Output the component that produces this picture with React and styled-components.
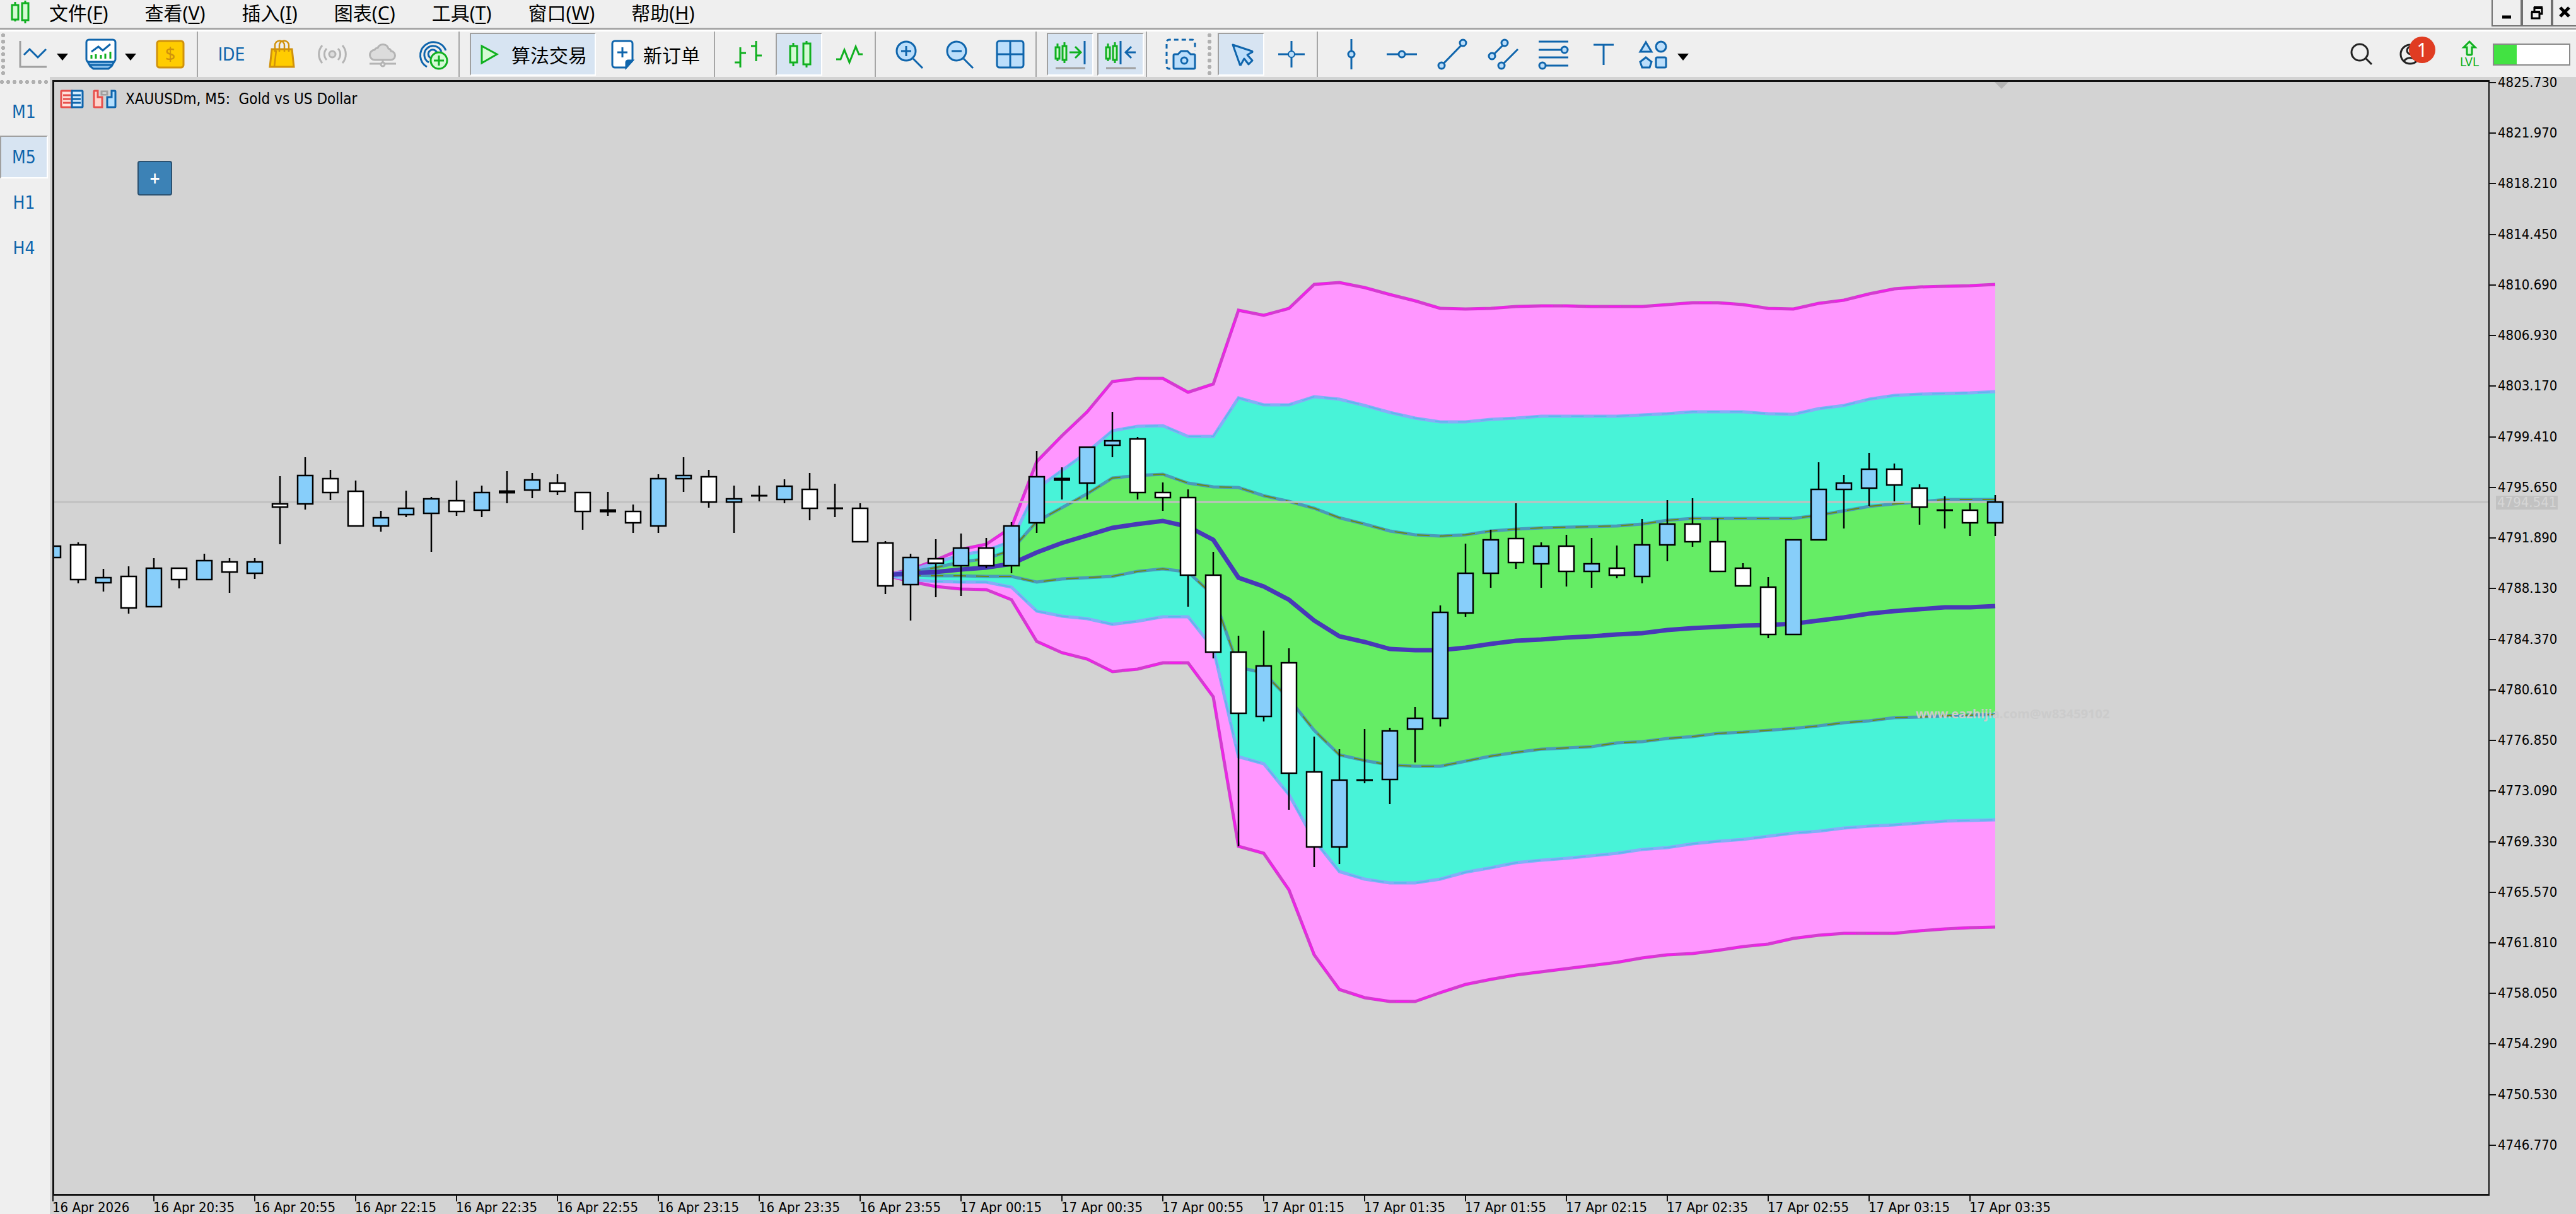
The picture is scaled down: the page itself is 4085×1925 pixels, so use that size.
import React from "react";
import styled, { createGlobalStyle, css } from "styled-components";

const BLUE = "#0f65ac";
const SKY = "#bbdefb";
const GREEN = "#10b020";
const MINT = "#d4fad4";
const GRAY = "#a0a0a0";

const Global = createGlobalStyle`
  * { box-sizing: border-box; }
  html, body, #root { height: 100%; }
  body { margin: 0; overflow: hidden; background: #efefef; }
  button { font: inherit; color: inherit; }
`;

const App_ = styled.div`
  display: flex;
  flex-direction: column;
  height: 100vh;
  overflow: hidden;
  background: #efefef;
  color: #000;
  font-family: "Noto Sans", "Noto Sans CJK SC", sans-serif;
  font-size: 30px;
`;

const MenuBar = styled.header`
  display: flex;
  flex: none;
  height: 47px;
  padding-left: 16px;
  border-bottom: 3px solid #a6a6a6;
`;

const MenuItems = styled.nav`
  display: flex;
  align-items: center;
  gap: 58px;
  height: 42px;
  margin-left: 30px;
`;

const MenuItem = styled.button`
  padding: 0;
  border: 0;
  background: none;
  line-height: 40px;
  white-space: nowrap;
  u {
    text-decoration-thickness: 2px;
    text-underline-offset: 4px;
  }
`;

const WindowControls = styled.div`
  display: flex;
  height: 42px;
  margin-left: auto;
`;

const WindowButton = styled.button`
  display: flex;
  align-items: center;
  justify-content: center;
  width: ${(p) => (p.$last ? 38 : 48)}px;
  padding: 0;
  border: 2px solid #707070;
  border-top: 0;
  border-right-width: ${(p) => (p.$last ? 0 : 2)}px;
  background: #efefef;
`;

const Toolbar = styled.div`
  display: flex;
  flex: none;
  align-items: stretch;
  height: 75px;
  border-top: 3px solid #fff;
`;

const Group = styled.div`
  display: flex;
  align-items: center;
  gap: ${(p) => p.$gap || 6}px;
  padding-left: ${(p) => p.$start || 0}px;
  padding-right: ${(p) => p.$end || 0}px;
`;

const Separator = styled.div`
  flex: none;
  width: 2px;
  margin: 0 16px 0 3px;
  background: #a6a6a6;
`;

const gripDots = css`
  background-image: radial-gradient(circle at 3px 3px, #b0b0b0 3px, transparent 3px);
  background-size: 10px 10px;
`;

const Grip = styled.div`
  flex: none;
  width: 6px;
  height: 66px;
  margin: 3px ${(p) => p.$after}px 0 ${(p) => p.$before}px;
  ${gripDots}
`;

const pressed = css`
  border-color: #a0a0a0 #fff #fff #a0a0a0;
  background: #d7e4f2;
`;

const ToolButton = styled.button`
  display: flex;
  flex: none;
  align-items: center;
  justify-content: center;
  gap: ${(p) => p.$gap || 14}px;
  width: ${(p) => p.$width || 74}px;
  height: 68px;
  padding: 0;
  border: 2px solid transparent;
  background: none;
  white-space: nowrap;
  color: ${(p) => (p.$blue ? BLUE : "#000")};
  font-family: ${(p) => (p.$blue ? '"DejaVu Sans Condensed", "Noto Sans", sans-serif' : "inherit")};
  font-size: ${(p) => (p.$blue ? 28 : 30)}px;
  ${(p) => p.$on && pressed}
`;

const Icon = styled.svg`
  display: block;
  flex: none;
  overflow: visible;
  fill: none;
  stroke: ${(p) => p.$color || BLUE};
  stroke-width: 3;
`;

const Status = styled.div`
  display: flex;
  align-items: center;
  gap: 32px;
  margin-left: auto;
  padding-right: 9px;
`;

const StatusButton = styled.button`
  position: relative;
  display: flex;
  flex: none;
  width: ${(p) => p.$width}px;
  height: 48px;
  padding: 0;
  border: 0;
  background: none;
`;

const Badge = styled.span`
  position: absolute;
  top: -4px;
  right: 0;
  width: 42px;
  height: 42px;
  border-radius: 50%;
  background: #e03c22;
  color: #fff;
  font-size: 30px;
  line-height: 42px;
  text-align: center;
`;

const Connection = styled.div`
  display: flex;
  align-items: center;
  gap: 15px;
`;

const Level = styled.div`
  display: flex;
  flex-direction: column;
  align-items: center;
  width: 44px;
  color: ${GREEN};
  font-family: "DejaVu Sans Condensed", "Noto Sans", sans-serif;
  font-size: 20px;
  line-height: 20px;
`;

const Meter = styled.div`
  width: 123px;
  height: 35px;
  border: 2px solid #8a8a8a;
  background: linear-gradient(to right, #42e242 30%, #fff 30%);
`;

const Workspace = styled.main`
  display: flex;
  flex: 1;
  min-height: 0;
`;

const Sidebar = styled.aside`
  display: flex;
  flex: none;
  flex-direction: column;
  gap: 4px;
  width: 79px;
`;

const SideGrip = styled.div`
  flex: none;
  height: 6px;
  margin: 5px 0 6px;
  ${gripDots}
`;

const ChartArea = styled.section`
  display: grid;
  flex: 1;
  grid-template-columns: 1fr 137px;
  grid-template-rows: 1fr 29px;
  min-width: 0;
  padding-left: 4px;
  background: #d3d3d3;
  font-family: "DejaVu Sans Condensed", "Noto Sans", sans-serif;
  font-size: 22px;
  line-height: 22px;
`;

const Plot = styled.div`
  position: relative;
  min-height: 0;
  margin-top: 5px;
  border: 3px solid #111;
  border-right-width: 2px;
`;

const Canvas = styled.svg`
  display: block;
  position: absolute;
  inset: 0;
  width: 100%;
  height: 100%;
`;

const ChartTitle = styled.h1`
  display: flex;
  position: absolute;
  top: 12px;
  left: 9px;
  align-items: center;
  gap: 14px;
  margin: 0;
  font-size: 24px;
  font-weight: 400;
  line-height: 30px;
  white-space: pre;
`;

const AddButton = styled.button`
  position: absolute;
  top: 125px;
  left: 132px;
  width: 55px;
  height: 55px;
  padding: 0;
  border: 2px solid #2b5170;
  border-radius: 4px;
  background: #3c82b6;
  color: #fff;
  font-size: 24px;
  font-weight: 700;
`;

const PriceAxis = styled.div`
  position: relative;
  display: flex;
  flex-direction: column;
  justify-content: space-between;
  min-height: 0;
  margin: -2px 0 69px;
`;

const Price = styled.div`
  display: flex;
  align-items: center;
  gap: 3px;
  height: 22px;
  &::before {
    content: "";
    width: 10px;
    height: 2px;
    background: #111;
  }
`;

const CurrentPrice = styled.div`
  position: absolute;
  top: 666px;
  left: 10px;
  padding: 0 2px;
  background: #c2c2c2;
  color: #d6d6d6;
`;

const TimeAxis = styled.div`
  display: grid;
  grid-column: 1 / -1;
  grid-template-columns: repeat(20, 160fr) 802fr;
`;

const Time = styled.div`
  min-width: 0;
  line-height: 20px;
  white-space: nowrap;
  &::before {
    content: "";
    display: block;
    width: 2px;
    height: 9px;
    background: #111;
  }
`;

const MENUS = [
  ["文件", "F"], ["查看", "V"], ["插入", "I"], ["图表", "C"],
  ["工具", "T"], ["窗口", "W"], ["帮助", "H"],
];

const TIMES = [
  "16 Apr 2026", "16 Apr 20:35", "16 Apr 20:55", "16 Apr 22:15", "16 Apr 22:35",
  "16 Apr 22:55", "16 Apr 23:15", "16 Apr 23:35", "16 Apr 23:55", "17 Apr 00:15",
  "17 Apr 00:35", "17 Apr 00:55", "17 Apr 01:15", "17 Apr 01:35", "17 Apr 01:55",
  "17 Apr 02:15", "17 Apr 02:35", "17 Apr 02:55", "17 Apr 03:15", "17 Apr 03:35",
];

const PRICES = Array.from({ length: 22 }, (_, i) => (4825.73 - i * 3.76).toFixed(3));

// kind (u = up, d = down, x = flat), wick top, body top, body bottom, wick bottom
const CANDLES = [
  ["u", 866, 866, 884, 884], ["d", 860, 864, 919, 925], ["u", 902, 916, 924, 938],
  ["d", 898, 914, 964, 973], ["u", 885, 901, 962, 962], ["d", 901, 901, 919, 933],
  ["u", 878, 889, 919, 919], ["d", 885, 891, 907, 940], ["u", 885, 891, 909, 918],
  ["d", 755, 799, 804, 863], ["u", 725, 754, 799, 808], ["d", 745, 759, 781, 793],
  ["d", 762, 779, 834, 834], ["u", 810, 821, 834, 843], ["u", 778, 806, 816, 820],
  ["u", 788, 791, 814, 875], ["d", 762, 794, 811, 818], ["u", 770, 781, 809, 820],
  ["x", 747, 779, 781, 798], ["u", 750, 761, 777, 790], ["d", 752, 766, 779, 785],
  ["d", 781, 781, 811, 840], ["x", 780, 809, 811, 818], ["d", 800, 811, 829, 845],
  ["u", 752, 759, 834, 845], ["u", 725, 754, 759, 780], ["d", 745, 756, 796, 805],
  ["u", 770, 791, 796, 845], ["x", 770, 786, 786, 795], ["u", 760, 771, 792, 798],
  ["d", 750, 776, 806, 825], ["x", 767, 806, 806, 820], ["d", 798, 806, 859, 859],
  ["d", 858, 861, 929, 942], ["u", 878, 884, 927, 984], ["d", 855, 886, 893, 947],
  ["u", 846, 869, 897, 945], ["d", 853, 869, 897, 901], ["u", 828, 834, 897, 909],
  ["u", 715, 756, 829, 845], ["x", 741, 759, 761, 792], ["u", 709, 709, 766, 792],
  ["u", 653, 699, 706, 725], ["d", 693, 696, 781, 792], ["d", 765, 781, 789, 810],
  ["d", 776, 789, 912, 962], ["d", 875, 912, 1034, 1044], ["d", 1008, 1034, 1131, 1342],
  ["u", 1000, 1056, 1136, 1144], ["d", 1028, 1051, 1226, 1284], ["d", 1168, 1224, 1343, 1375],
  ["u", 1188, 1237, 1343, 1370], ["x", 1156, 1237, 1237, 1242], ["u", 1154, 1159, 1236, 1275],
  ["u", 1121, 1139, 1156, 1209], ["u", 960, 971, 1139, 1152], ["u", 862, 909, 972, 978],
  ["u", 840, 856, 909, 932], ["d", 798, 854, 892, 902], ["u", 860, 866, 894, 932],
  ["d", 848, 866, 906, 930], ["u", 853, 894, 906, 932], ["d", 865, 901, 912, 917],
  ["u", 823, 864, 914, 925], ["u", 793, 831, 864, 890], ["d", 790, 831, 859, 867],
  ["d", 822, 859, 906, 906], ["d", 893, 901, 929, 929], ["d", 915, 931, 1006, 1012],
  ["u", 856, 856, 1006, 1006], ["u", 733, 776, 856, 856], ["u", 753, 766, 776, 838],
  ["u", 718, 744, 774, 802], ["d", 735, 744, 769, 795], ["d", 768, 774, 804, 832],
  ["x", 787, 809, 809, 838], ["d", 798, 809, 829, 850], ["u", 785, 796, 829, 850],
];

const BAND_START = 33;
const UPPER3 = [912, 903, 888, 871, 863, 836, 732, 691, 653, 605, 600, 600, 622, 609, 492, 500, 489, 451, 448, 456, 467, 477, 489, 490, 489, 486, 485, 485, 486, 486, 486, 483, 480, 480, 483, 489, 490, 481, 476, 466, 458, 455, 454, 453, 451];
const UPPER2 = [912, 905, 892, 880, 873, 858, 775, 746, 717, 683, 676, 675, 692, 692, 631, 642, 642, 629, 633, 643, 654, 663, 669, 669, 665, 663, 660, 660, 660, 660, 658, 656, 653, 653, 653, 656, 657, 648, 643, 633, 627, 625, 624, 623, 621];
const UPPER1 = [912, 907, 900, 891, 886, 872, 827, 805, 783, 758, 754, 752, 766, 772, 773, 786, 795, 806, 821, 831, 842, 848, 850, 848, 842, 839, 837, 836, 835, 834, 831, 825, 822, 822, 822, 822, 822, 817, 810, 803, 799, 796, 792, 792, 792];
const MIDDLE = [912, 909, 907, 903, 900, 894, 876, 861, 849, 837, 831, 826, 835, 856, 916, 930, 951, 984, 1009, 1018, 1029, 1031, 1031, 1027, 1021, 1016, 1014, 1011, 1009, 1006, 1004, 999, 996, 994, 992, 991, 989, 984, 979, 973, 969, 966, 963, 963, 961];
const LOWER1 = [912, 912, 913, 913, 914, 914, 923, 918, 916, 914, 906, 902, 907, 944, 1058, 1067, 1108, 1158, 1197, 1206, 1213, 1215, 1215, 1207, 1199, 1193, 1188, 1186, 1184, 1178, 1176, 1171, 1168, 1163, 1161, 1158, 1155, 1151, 1146, 1143, 1138, 1137, 1135, 1134, 1133];
const LOWER2 = [912, 919, 922, 923, 923, 931, 969, 977, 981, 990, 985, 978, 978, 1028, 1200, 1211, 1260, 1332, 1382, 1394, 1400, 1400, 1394, 1383, 1376, 1368, 1364, 1361, 1357, 1353, 1347, 1344, 1338, 1334, 1331, 1326, 1321, 1318, 1313, 1310, 1308, 1305, 1302, 1301, 1300];
const LOWER3 = [912, 922, 930, 934, 935, 951, 1017, 1035, 1045, 1065, 1061, 1051, 1051, 1105, 1342, 1353, 1411, 1514, 1569, 1582, 1588, 1588, 1574, 1561, 1553, 1546, 1541, 1536, 1531, 1526, 1519, 1514, 1512, 1507, 1501, 1497, 1488, 1483, 1480, 1480, 1480, 1476, 1473, 1471, 1470];

const xAt = (i) => 84 + i * 40;
const points = (band) => band.map((y, i) => `${xAt(i + BAND_START)},${y}`);
const line = (band) => points(band).join(" ");
const area = (top, bottom) => [...points(top), ...points(bottom).reverse()].join(" ");

function BandLine({ band, color, accent }) {
  return (
    <g fill="none">
      <polyline points={line(band)} stroke={color} strokeWidth="5" />
      <polyline points={line(band)} stroke={accent} strokeWidth="2" strokeDasharray="20 16" />
    </g>
  );
}

function Candle({ i, data: [kind, high, top, bottom, low] }) {
  const x = xAt(i);
  return (
    <g stroke="#000" strokeWidth="2.5">
      {low > high && <path d={`M${x} ${high}V${low}`} />}
      {kind === "x" ? (
        <path d={`M${x - 13} ${(top + bottom) / 2}h26`} strokeWidth={bottom > top ? 5 : 3} />
      ) : (
        <rect x={x - 12} y={top} width="24" height={bottom - top} fill={kind === "u" ? "#87cefa" : "#fff"} />
      )}
    </g>
  );
}

function Chart() {
  return (
    <Canvas viewBox="86 130 3860 1763" preserveAspectRatio="none" role="img" aria-label="XAUUSDm M5">
      <polygon points={area(UPPER3, LOWER3)} fill="#ff96ff" />
      <polygon points={area(UPPER2, LOWER2)} fill="#48f3d8" />
      <polygon points={area(UPPER1, LOWER1)} fill="#65ed65" />
      <BandLine band={UPPER3} color="#d43cd0" accent="#f818f0" />
      <BandLine band={LOWER3} color="#d43cd0" accent="#f818f0" />
      <BandLine band={UPPER2} color="#84aef8" accent="#5cb8ec" />
      <BandLine band={LOWER2} color="#84aef8" accent="#5cb8ec" />
      <BandLine band={UPPER1} color="#4a9aba" accent="#6a8c14" />
      <BandLine band={LOWER1} color="#4a9aba" accent="#6a8c14" />
      <polyline points={line(MIDDLE)} fill="none" stroke="#4838b8" strokeWidth="7" />
      <path d="M86 796H3948" stroke="#c0c0c0" strokeWidth="3" />
      {CANDLES.map((c, i) => <Candle key={i} i={i} data={c} />)}
      <path d="M3163 130h22l-11 11z" fill="#b4b4b4" />
      <text x="3038" y="1139" fill="#cbcbcb" fontFamily="Noto Sans, sans-serif" fontSize="20" fontWeight="700">
        www.eazhijia.com@w83459102
      </text>
    </Canvas>
  );
}

const Glyph = ({ color, children, w = 48 }) => (
  <Icon width={w} height="48" viewBox={`0 0 ${w} 48`} $color={color} aria-hidden="true">{children}</Icon>
);

const Caret = () => (
  <Icon width="18" height="26" viewBox="0 0 18 26" aria-hidden="true">
    <path d="M0 12h18l-9 11z" fill="#000" stroke="none" />
  </Icon>
);

const Tool = ({ label, children, on, color, width, w }) => (
  <ToolButton aria-label={label} $on={on} $width={width}>
    <Glyph color={color} w={w}>{children}</Glyph>
  </ToolButton>
);

const TwoCandles = () => (
  <g stroke={GREEN} fill={MINT}>
    <path d="M6 7v28M17 5v33" />
    <rect x="3" y="13" width="6" height="18" />
    <rect x="14" y="11" width="6" height="22" />
  </g>
);

const Lens = () => (
  <>
    <path d="M30 31L45 46" />
    <circle cx="19" cy="19" r="15" fill={SKY} />
  </>
);

function MainToolbar() {
  return (
    <Toolbar>
      <Grip $before={2} $after={0} />
      <Group $gap={20} $start={16} $end={9}>
        <ToolButton aria-label="图表" $width={88}>
          <Glyph>
            <path d="M4 3V44H46" stroke={GRAY} />
            <path d="M10 25L19 16L32 29L45 16" />
          </Glyph>
          <Caret />
        </ToolButton>
        <ToolButton aria-label="指标" $width={88}>
          <Glyph>
            <path d="M3 36H45L41 43L36 47H12L7 43Z" fill="#8fc4ee" />
            <path d="M6 41H42" />
            <rect x="1" y="1" width="46" height="35" rx="4" fill="#fff" />
            <path d="M9 20L20 12L27 18L39 8" />
            <path d="M9 25V31M16 24V31M24 25V31M31 23V31M39 20V31" stroke={GREEN} />
          </Glyph>
          <Caret />
        </ToolButton>
        <ToolButton aria-label="交易品种" $width={60}>
          <Glyph color="#d0920c">
            <rect x="3" y="3" width="42" height="42" rx="4" fill="#fc0" />
            <text x="24" y="34" textAnchor="middle" fontSize="29" fill="#d0920c" stroke="none">$</text>
          </Glyph>
        </ToolButton>
      </Group>
      <Separator />
      <Group>
        <ToolButton $blue>IDE</ToolButton>
        <Tool label="市场" color="#d0920c">
          <path d="M8 16H40L43 44H5Z" fill="#fc0" />
          <path d="M15 18L12 44M13 20V10a7 7 0 0 1 15 0V20M20 20V10a7 7 0 0 1 15 0V20" strokeWidth="2.5" />
        </Tool>
        <Tool label="信号" color="#b4b4b4">
          <circle cx="24" cy="24" r="5" fill="#ddd" />
          <path d="M15 15a13 13 0 0 0 0 18M33 15a13 13 0 0 1 0 18M8 10a21 21 0 0 0 0 28M40 10a21 21 0 0 1 0 28" />
        </Tool>
        <Tool label="虚拟主机" color="#b4b4b4">
          <path d="M12 33a8 8 0 0 1-1-16a6 6 0 0 1 5-3a9 9 0 0 1 17 1a5 5 0 0 1 4 4a7 7 0 0 1-1 14Z" fill="#dcdcdc" />
          <path d="M24 33v5M3 39h17M28 39h17" />
          <circle cx="24" cy="40" r="3" />
        </Tool>
        <Tool label="VPS">
          <path d="M14 44A21 21 0 1 1 44 18M17 37A14 14 0 1 1 37 20M20 30A7 7 0 1 1 30 22" />
          <circle cx="33" cy="34" r="13" fill={MINT} stroke={GREEN} />
          <path d="M33 26v16M25 34h16" stroke={GREEN} />
        </Tool>
      </Group>
      <Separator />
      <Group>
        <ToolButton $on $width={200} $gap={16}>
          <Glyph color={GREEN} w={36}><path d="M5 11V38L29 24Z" fill={MINT} /></Glyph>
          算法交易
        </ToolButton>
        <ToolButton $width={178}>
          <Glyph w={36}>
            <path d="M5 3H29a4 4 0 0 1 4 4V34L23 45H5a4 4 0 0 1-4-4V7a4 4 0 0 1 4-4Z" fill="#fff" />
            <path d="M23 45V37a3 3 0 0 1 3-3H33Z" fill={BLUE} />
            <path d="M17 13V29M9 21H25" />
          </Glyph>
          新订单
        </ToolButton>
      </Group>
      <Separator />
      <Group>
        <Tool label="柱状图" color={GREEN}>
          <path d="M11 13V45M2 37H11M11 22H20M36 3V35M28 11H36M36 26H45" />
        </Tool>
        <Tool label="蜡烛图" color={GREEN} on>
          <path d="M15 6V43M36 3V45" />
          <rect x="10" y="11" width="11" height="26" fill={MINT} />
          <rect x="31" y="7" width="11" height="33" fill={MINT} />
        </Tool>
        <Tool label="折线图" color={GREEN}>
          <path d="M3 32H10L16 17L24 37L34 12L39 24H45" />
        </Tool>
      </Group>
      <Separator />
      <Group>
        <Tool label="放大"><Lens /><path d="M11 19H27M19 11V27" /></Tool>
        <Tool label="缩小"><Lens /><path d="M11 19H27" /></Tool>
        <Tool label="平铺">
          <rect x="3" y="3" width="42" height="42" rx="4" fill={SKY} />
          <path d="M24 3V45M3 24H45" />
        </Tool>
      </Group>
      <Separator />
      <Group>
        <Tool label="自动滚动" on w={52}>
          <TwoCandles />
          <path d="M25 21H42M34 12L43 21L34 30" stroke={GREEN} />
          <path d="M49 3V40" />
          <path d="M3 46H50" stroke={GRAY} />
        </Tool>
        <Tool label="图表平移" on w={52}>
          <TwoCandles />
          <path d="M26 3V40M50 21H34M43 12L34 21L43 30" />
          <path d="M3 46H50" stroke={GRAY} />
        </Tool>
      </Group>
      <Separator />
      <Group>
        <Tool label="截图">
          <path d="M8 47H6a4 4 0 0 1-4-4V5a4 4 0 0 1 4-4H43a4 4 0 0 1 4 4V18" strokeDasharray="7 5" />
          <path d="M13 26a2 2 0 0 1 2-2h5l5-5h10l5 5h5a2 2 0 0 1 2 2V45a2 2 0 0 1-2 2H15a2 2 0 0 1-2-2Z" fill={SKY} />
          <circle cx="30" cy="34" r="5" />
        </Tool>
      </Group>
      <Grip $before={6} $after={10} />
      <Group>
        <Tool label="光标" on>
          <path d="M11 9L41 19a1 1 0 0 1 0 2L34 25L42 34L36 40L29 31L24 40a1 1 0 0 1-2 0Z" fill={SKY} strokeLinejoin="round" />
        </Tool>
        <Tool label="十字线">
          <path d="M24 3V45M3 24H45" />
          <circle cx="24" cy="24" r="5" fill={SKY} strokeWidth="2" />
        </Tool>
      </Group>
      <Separator />
      <Group>
        <Tool label="垂直线"><path d="M24 0V48" /><circle cx="24" cy="24" r="5" fill={SKY} /></Tool>
        <Tool label="水平线"><path d="M0 24H48" /><circle cx="24" cy="24" r="5" fill={SKY} /></Tool>
        <Tool label="趋势线">
          <path d="M7 42L41 7" />
          <g fill={SKY}><circle cx="7" cy="42" r="5" /><circle cx="41" cy="6" r="5" /></g>
        </Tool>
        <Tool label="通道">
          <path d="M7 27L27 7M22 42L48 16" />
          <g fill={SKY}><circle cx="7" cy="27" r="5" /><circle cx="27" cy="6" r="5" /><circle cx="22" cy="42" r="5" /></g>
        </Tool>
        <Tool label="斐波那契">
          <path d="M1 4H48M1 17H48M1 29H48M1 42H48" />
          <g fill={SKY}><circle cx="42" cy="17" r="5" /><circle cx="7" cy="42" r="5" /></g>
        </Tool>
        <Tool label="文本"><path d="M8 9H40M24 9V41" /></Tool>
        <ToolButton aria-label="图形" $width={104}>
          <Glyph>
            <g fill={SKY}>
              <path d="M12 5L21 20H3Z" />
              <circle cx="36" cy="12" r="8" />
              <path d="M12 29L21 36L18 45H6L3 36Z" />
              <rect x="28" y="29" width="16" height="16" rx="2" />
            </g>
          </Glyph>
          <Caret />
        </ToolButton>
      </Group>
      <Status>
        <StatusButton $width={48} aria-label="搜索">
          <Glyph color="#222"><circle cx="20" cy="21" r="13" /><path d="M29 30L39 40" /></Glyph>
        </StatusButton>
        <StatusButton $width={60} aria-label="账户">
          <Glyph color="#222">
            <circle cx="20" cy="24" r="15" />
            <circle cx="21" cy="18" r="6" />
            <path d="M10 35a12 12 0 0 1 20 0" />
          </Glyph>
          <Badge>1</Badge>
        </StatusButton>
        <Connection>
          <Level>
            <Icon width="22" height="24" viewBox="0 0 22 24" $color={GREEN} aria-hidden="true">
              <path d="M11 2L20 11H15V21a2 2 0 0 1-2 2H9a2 2 0 0 1-2-2V11H2Z" fill={MINT} />
            </Icon>
            LVL
          </Level>
          <Meter />
        </Connection>
      </Status>
    </Toolbar>
  );
}

export default function App() {
  return (
    <App_>
      <Global />
      <MenuBar>
        <Icon width="32" height="40" viewBox="0 0 32 40" $color={GREEN} aria-hidden="true">
          <path d="M8 3V34M24 1V37" />
          <rect x="3" y="8" width="10" height="23" fill={MINT} />
          <rect x="19" y="5" width="10" height="27" fill={MINT} />
        </Icon>
        <MenuItems>
          {MENUS.map(([name, key]) => (
            <MenuItem key={key}>{name}(<u>{key}</u>)</MenuItem>
          ))}
        </MenuItems>
        <WindowControls>
          <WindowButton aria-label="最小化">
            <Icon width="24" height="24" viewBox="0 0 24 24" $color="#000"><path d="M5 19H19" strokeWidth="5" /></Icon>
          </WindowButton>
          <WindowButton aria-label="还原">
            <Icon width="24" height="24" viewBox="0 0 24 24" $color="#000">
              <path d="M7 4H21M3 11H17" strokeWidth="4" />
              <path d="M8 3V9M20 4V14H17M4 11V21H16V11" />
            </Icon>
          </WindowButton>
          <WindowButton aria-label="关闭" $last>
            <Icon width="24" height="24" viewBox="0 0 24 24" $color="#000"><path d="M5 4L19 18M19 4L5 18" strokeWidth="5" /></Icon>
          </WindowButton>
        </WindowControls>
      </MenuBar>
      <MainToolbar />
      <Workspace>
        <Sidebar>
          <SideGrip />
          {["M1", "M5", "H1", "H4"].map((t) => (
            <ToolButton key={t} $blue $width={76} $on={t === "M5"}>{t}</ToolButton>
          ))}
        </Sidebar>
        <ChartArea>
          <Plot>
            <Chart />
            <ChartTitle>
              <Icon width="38" height="30" viewBox="0 0 38 30" aria-hidden="true">
                <path d="M19 2H3a1 1 0 0 0-1 1V27a1 1 0 0 0 1 1H19Z" fill="#ffe2dc" stroke="#e8504c" />
                <path d="M19 2H35a1 1 0 0 1 1 1V27a1 1 0 0 1-1 1H19Z" fill="#d4ecff" />
                <path d="M5 9H17M5 15H17M5 21H17" stroke="#e8504c" />
                <path d="M20 9H33M20 15H33M20 21H33" />
              </Icon>
              <Icon width="38" height="30" viewBox="0 0 38 30" aria-hidden="true">
                <path d="M2 3a1 1 0 0 1 1-1H8V12H15V28H3a1 1 0 0 1-1-1Z" fill="#ffd4cc" stroke="#e8504c" />
                <path d="M36 3a1 1 0 0 0-1-1H30V12H23V28H35a1 1 0 0 0 1-1Z" fill="#b4e0ff" />
                <rect x="14" y="3" width="9" height="5" fill="#eee" stroke={GRAY} />
              </Icon>
              {"XAUUSDm, M5:  Gold vs US Dollar"}
            </ChartTitle>
            <AddButton aria-label="添加">+</AddButton>
          </Plot>
          <PriceAxis>
            {PRICES.map((p) => <Price key={p}>{p}</Price>)}
            <CurrentPrice>4794.541</CurrentPrice>
          </PriceAxis>
          <TimeAxis>
            {TIMES.map((t) => <Time key={t}>{t}</Time>)}
          </TimeAxis>
        </ChartArea>
      </Workspace>
    </App_>
  );
}
